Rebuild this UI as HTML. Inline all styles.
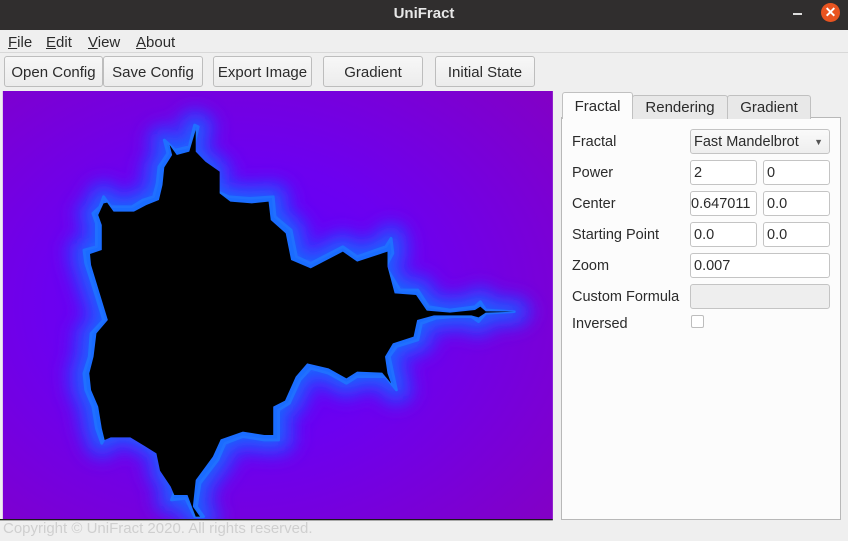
<!DOCTYPE html>
<html><head><style>
*{box-sizing:border-box;margin:0;padding:0}
body{width:848px;height:541px;background:#efefef;font-family:"Liberation Sans",sans-serif;font-size:14px;color:#2b2b2b;position:relative;overflow:hidden}
.a{position:absolute}
.title{left:0;top:0;width:848px;height:30px;background:#302e2e;color:#e8e8e8;font-weight:bold;font-size:15px;text-align:center;line-height:28px}
.menu{left:0;top:30px;width:848px;height:23px;border-bottom:1px solid #d8d8d8}
.menu span{position:absolute;top:4px;font-size:15px}
.btn{position:absolute;top:56px;height:31px;border:1px solid #bdbdbd;border-radius:3px;background:linear-gradient(#f7f7f7,#ececec);text-align:center;line-height:31px;font-size:15px}
.tab{position:absolute;height:24px;border:1px solid #c0c0c0;border-bottom:none;background:#e8e8e8;text-align:center;line-height:24px;font-size:15px;border-radius:3px 3px 0 0}
.lbl{position:absolute;left:572px;font-size:14.5px}
.in{position:absolute;height:25px;border:1px solid #c4c4c4;border-radius:3px;background:#fff;padding-left:3px;line-height:25px;font-size:14.5px}
</style></head><body>
<div class="a title">UniFract</div>
<div class="a" style="left:793px;top:13px;width:9px;height:2px;background:#ddd"></div>
<div class="a" style="left:821px;top:3px;width:19px;height:19px;border-radius:50%;background:#e95420;color:#fff;text-align:center;line-height:19px;font-size:14px;font-weight:bold">✕</div>
<div class="a menu">
<span style="left:8px"><u>F</u>ile</span><span style="left:46px"><u>E</u>dit</span><span style="left:88px"><u>V</u>iew</span><span style="left:136px"><u>A</u>bout</span>
</div>
<div class="btn" style="left:4px;width:99px">Open Config</div>
<div class="btn" style="left:103px;width:100px">Save Config</div>
<div class="btn" style="left:213px;width:99px">Export Image</div>
<div class="btn" style="left:323px;width:100px">Gradient</div>
<div class="btn" style="left:435px;width:100px">Initial State</div>

<svg class="a" style="left:0;top:90px" width="560" height="451" viewBox="0 0 1568 1353" preserveAspectRatio="none">
<defs>
<radialGradient id="g" cx="0.42" cy="0.5" r="0.75">
<stop offset="0" stop-color="#5a00ff"/><stop offset="0.45" stop-color="#6c00f0"/><stop offset="1" stop-color="#8200c6"/>
</radialGradient>
<filter id="b"><feGaussianBlur stdDeviation="22"/></filter>
<polygon id="p" points="460,150 490,180 530,170 545,105 555,110 540,180 560,210 600,240 600,300 640,320 700,325 765,320 770,380 815,420 830,500 870,520 960,470 1000,500 1080,470 1095,445 1100,490 1080,530 1120,600 1170,600 1200,650 1260,660 1330,650 1345,635 1360,660 1440,665 1360,670 1340,695 1320,680 1270,680 1220,685 1180,700 1170,750 1110,770 1090,800 1100,850 1110,900 1080,860 1000,860 970,880 920,850 870,835 840,870 810,940 780,960 780,1050 740,1050 680,1040 630,1060 610,1110 560,1180 550,1250 570,1280 545,1280 520,1225 480,1230 490,1200 460,1150 450,1080 410,1055 370,1030 300,1030 285,1060 270,1015 260,950 240,900 235,850 250,800 255,730 290,690 270,620 240,520 235,480 270,470 270,400 260,370 280,350 290,320 310,350 370,350 400,330 430,320 440,280 445,230 470,190"/>
</defs>
<rect x="8" y="3" width="1540" height="1284" fill="url(#g)"/>
<use href="#p" fill="#3a30ff" stroke="#3a30ff" stroke-width="110" stroke-linejoin="round" filter="url(#b)" opacity="0.7"/>
<use href="#p" fill="#1a66ff" stroke="#1a60ff" stroke-width="40" stroke-linejoin="round" filter="url(#b)"/>
<use href="#p" fill="#1a6cff" stroke="#2070ff" stroke-width="8" stroke-linejoin="round"/>
<polygon points="475,165 495,195 530,185 548,120 548,185 575,215 615,245 615,310 645,335 705,340 752,335 758,390 800,430 815,510 870,535 960,485 1000,515 1085,485 1085,530 1105,610 1165,615 1195,662 1260,668 1330,660 1345,650 1360,664 1440,665 1360,668 1340,682 1320,676 1270,676 1215,676 1168,690 1158,740 1100,760 1078,800 1085,850 1095,880 1070,848 1000,845 970,865 920,835 860,820 828,860 798,932 765,950 765,1035 740,1035 680,1025 618,1048 596,1100 548,1170 540,1250 560,1280 548,1280 525,1215 488,1215 478,1190 448,1142 438,1090 405,1068 365,1042 310,1042 293,1050 285,1015 275,950 255,900 250,850 262,800 270,730 302,690 282,620 255,525 252,492 285,480 285,405 275,375 290,340 300,338 318,365 375,365 410,345 445,330 455,285 460,232 482,195" fill="#000"/>
<rect x="0" y="1287" width="1568" height="66" fill="#efefef"/>
<rect x="0" y="1287" width="1548" height="4" fill="#1a1a1a"/>
</svg>
<div class="a" style="left:3px;top:520px;font-size:15px;color:#cfcfcf">Copyright © UniFract 2020. All rights reserved.</div>

<div class="a" style="left:561px;top:117px;width:280px;height:403px;background:#fcfcfc;border:1px solid #b8b8b8"></div>
<div class="tab" style="left:632px;top:95px;width:96px">Rendering</div>
<div class="tab" style="left:727px;top:95px;width:84px">Gradient</div>
<div class="tab" style="left:562px;top:92px;width:71px;height:27px;background:#fcfcfc;line-height:27px">Fractal</div>

<div class="lbl" style="top:134px">Fractal</div>
<div class="in" style="left:690px;top:129px;width:140px;background:linear-gradient(#fafafa,#eeeeee)">Fast Mandelbrot<span style="position:absolute;right:6px;top:0;font-size:9px;color:#555">▼</span></div>
<div class="lbl" style="top:165px">Power</div>
<div class="in" style="left:690px;top:160px;width:67px">2</div>
<div class="in" style="left:763px;top:160px;width:67px">0</div>
<div class="lbl" style="top:196px">Center</div>
<div class="in" style="left:690px;top:191px;width:67px;padding-left:0">0.647011</div>
<div class="in" style="left:763px;top:191px;width:67px">0.0</div>
<div class="lbl" style="top:227px">Starting Point</div>
<div class="in" style="left:690px;top:222px;width:67px">0.0</div>
<div class="in" style="left:763px;top:222px;width:67px">0.0</div>
<div class="lbl" style="top:258px">Zoom</div>
<div class="in" style="left:690px;top:253px;width:140px">0.007</div>
<div class="lbl" style="top:289px">Custom Formula</div>
<div class="in" style="left:690px;top:284px;width:140px;background:#eeeeee"></div>
<div class="lbl" style="top:316px">Inversed</div>
<div class="a" style="left:691px;top:315px;width:13px;height:13px;border:1px solid #bdbdbd;background:#fff;border-radius:2px"></div>
</body></html>
